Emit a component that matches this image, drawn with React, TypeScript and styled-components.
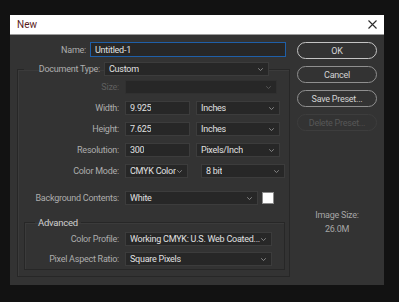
import React from 'react';
import styled, {createGlobalStyle} from 'styled-components';

const GlobalStyle = createGlobalStyle`
  html, body {
    margin: 0;
    padding: 0;
    background: #121212;
  }
  body {
    font-family: Roboto, "Liberation Sans", sans-serif;
    font-size: 9px;
    letter-spacing: -0.25px;
  }
`

const Chevron = () => (
    <svg width="7" height="5" viewBox="0 0 7 5">
        <path d="M1.2 1.3 L3.5 3.5 L5.8 1.3" fill="none" stroke="#8e8e8e" strokeWidth="0.9"/>
    </svg>
);

type SelectProps = { value?: string; width: number; disabled?: boolean };

const Select = ({value, width, disabled}: SelectProps) => (
    <FieldStyle $width={width} $disabled={disabled}>
        <span>{value}</span>
        <Chevron/>
    </FieldStyle>
);

type RowProps = { label: string; labelWidth?: number; space?: number; disabled?: boolean; children: React.ReactNode };

const Row = ({label, labelWidth = 95, space = 0, disabled, children}: RowProps) => (
    <RowStyle $space={space}>
        <LabelStyle $width={labelWidth} $disabled={disabled}>{label}</LabelStyle>
        {children}
    </RowStyle>
);

export default function App() {
    return (
        <>
            <GlobalStyle/>
            <PageStyle>
                <DialogStyle>
                    <TitleBarStyle>
                        <TitleStyle>New</TitleStyle>
                        <svg width="9" height="9" viewBox="0 0 9 9">
                            <path d="M0.5 0.5 L8.5 8.5 M8.5 0.5 L0.5 8.5" stroke="#2b2b2b" strokeWidth="1.1"/>
                        </svg>
                    </TitleBarStyle>
                    <BodyStyle>
                        <FormStyle>
                            <NameRowStyle>
                                <LabelStyle $width={69}>Name:</LabelStyle>
                                <FieldStyle $width={196} $focused>
                                    <span>Untitled-1</span>
                                </FieldStyle>
                            </NameRowStyle>

                            <GroupStyle>
                                <LegendStyle>
                                    <LabelStyle $width={76}>Document Type:</LabelStyle>
                                    <Select value="Custom" width={165}/>
                                </LegendStyle>
                                <GroupBodyStyle>
                                    <Row label="Size:" disabled>
                                        <Select width={152} disabled/>
                                    </Row>
                                    <Row label="Width:">
                                        <FieldStyle $width={65}><span>9.925</span></FieldStyle>
                                        <Select value="Inches" width={84}/>
                                    </Row>
                                    <Row label="Height:">
                                        <FieldStyle $width={65}><span>7.625</span></FieldStyle>
                                        <Select value="Inches" width={84}/>
                                    </Row>
                                    <Row label="Resolution:">
                                        <FieldStyle $width={65}><span>300</span></FieldStyle>
                                        <Select value="Pixels/Inch" width={84}/>
                                    </Row>
                                    <Row label="Color Mode:">
                                        <Select value="CMYK Color" width={63}/>
                                        <GapStyle/>
                                        <Select value="8 bit" width={84}/>
                                    </Row>
                                    <Row label="Background Contents:" space={6}>
                                        <Select value="White" width={133}/>
                                        <SwatchStyle/>
                                    </Row>

                                    <AdvancedStyle>
                                        <AdvLegendStyle>Advanced</AdvLegendStyle>
                                        <GroupBodyStyle $tight>
                                            <Row label="Color Profile:" labelWidth={88}>
                                                <Select value="Working CMYK:  U.S. Web Coated..." width={147}/>
                                            </Row>
                                            <Row label="Pixel Aspect Ratio:" labelWidth={88}>
                                                <Select value="Square Pixels" width={147}/>
                                            </Row>
                                        </GroupBodyStyle>
                                    </AdvancedStyle>
                                </GroupBodyStyle>
                            </GroupStyle>
                        </FormStyle>

                        <ButtonsStyle>
                            <ButtonStyle $primary>OK</ButtonStyle>
                            <ButtonStyle>Cancel</ButtonStyle>
                            <ButtonStyle>Save Preset...</ButtonStyle>
                            <ButtonStyle $disabled>Delete Preset...</ButtonStyle>
                            <ImageSizeStyle>
                                <div>Image Size:</div>
                                <div>26.0M</div>
                            </ImageSizeStyle>
                        </ButtonsStyle>
                    </BodyStyle>
                </DialogStyle>
            </PageStyle>
        </>
    );
}

const PageStyle = styled.div`
  width: 399px;
  height: 302px;
  padding: 15px 0 0 10px;
  box-sizing: border-box;
  background: #121212;
`

const DialogStyle = styled.div`
  width: 374px;
  height: 270px;
  background: #333333;
  display: flex;
  flex-direction: column;
`

const TitleBarStyle = styled.div`
  height: 20px;
  background: #ffffff;
  display: flex;
  align-items: center;
  justify-content: space-between;
  padding: 0 7px 0 7px;
  border-bottom: 1px solid #9c9c9c;
  box-sizing: border-box;
`

const TitleStyle = styled.div`
  font-size: 10px;
  letter-spacing: 0;
  color: #5a1d1d;
`

const BodyStyle = styled.div`
  display: flex;
  column-gap: 11px;
  padding: 7px 7px 8px 7px;
`

const FormStyle = styled.div`
  width: 269px;
  display: flex;
  flex-direction: column;
  row-gap: 5px;
`

const NameRowStyle = styled.div`
  display: flex;
  align-items: center;
  column-gap: 4px;
`

const LabelStyle = styled.div<{ $width: number; $disabled?: boolean }>`
  width: ${p => p.$width}px;
  flex-shrink: 0;
  text-align: right;
  white-space: nowrap;
  color: ${p => p.$disabled ? '#5f5f5f' : '#adadad'};
`

const FieldStyle = styled.div<{ $width: number; $focused?: boolean; $disabled?: boolean }>`
  width: ${p => p.$width}px;
  height: ${p => p.$focused ? 15 : 14}px;
  box-sizing: border-box;
  display: flex;
  align-items: center;
  justify-content: space-between;
  padding: 0 4px 0 4px;
  background: #272727;
  border: 1px solid ${p => p.$focused ? '#1f5fa8' : p.$disabled ? '#303030' : '#3c3c3c'};
  color: #e0e0e0;
  white-space: nowrap;
  overflow: hidden;
  span {
    overflow: hidden;
  }
  svg {
    flex-shrink: 0;
    opacity: ${p => p.$disabled ? 0.5 : 1};
  }
`

const GroupStyle = styled.fieldset`
  width: 267px;
  margin: 0;
  padding: 0 4px 6px 6px;
  box-sizing: border-box;
  border: 1px solid #272727;
  box-shadow: inset 1px 1px 0 #3b3b3b;
`

const LegendStyle = styled.legend`
  padding: 0;
  display: flex;
  align-items: center;
  column-gap: 4px;
`

const GroupBodyStyle = styled.div<{ $tight?: boolean }>`
  display: flex;
  flex-direction: column;
  row-gap: ${p => p.$tight ? 6 : 7}px;
  padding-top: 4px;
`

const RowStyle = styled.div<{ $space: number }>`
  display: flex;
  align-items: center;
  column-gap: 6px;
  margin-top: ${p => p.$space}px;
`

const GapStyle = styled.div`
  width: 1px;
`

const SwatchStyle = styled.div`
  width: 10px;
  height: 10px;
  margin-left: -2px;
  background: #ffffff;
  border: 1px solid #8a8a8a;
`

const AdvancedStyle = styled.fieldset`
  margin: 5px 0 0 0;
  padding: 0 0 3px 6px;
  border: 1px solid #272727;
  box-shadow: inset 1px 1px 0 #3b3b3b;
`

const AdvLegendStyle = styled.legend`
  padding: 0 3px;
  margin-left: 4px;
  color: #cfcfcf;
  font-size: 9.5px;
`

const ButtonsStyle = styled.div`
  width: 80px;
  display: flex;
  flex-direction: column;
  row-gap: 7px;
`

const ButtonStyle = styled.div<{ $primary?: boolean; $disabled?: boolean }>`
  height: 17px;
  box-sizing: border-box;
  border-radius: 9px;
  display: flex;
  align-items: center;
  justify-content: center;
  border: ${p => p.$primary ? '1.5px solid #c4c4c4' : p.$disabled ? '1px solid #3d3d3d' : '1px solid #8f8f8f'};
  color: ${p => p.$disabled ? '#575757' : '#d4d4d4'};
`

const ImageSizeStyle = styled.div`
  margin-top: 72px;
  display: flex;
  flex-direction: column;
  align-items: center;
  row-gap: 4px;
  color: #a6a6a6;
`
